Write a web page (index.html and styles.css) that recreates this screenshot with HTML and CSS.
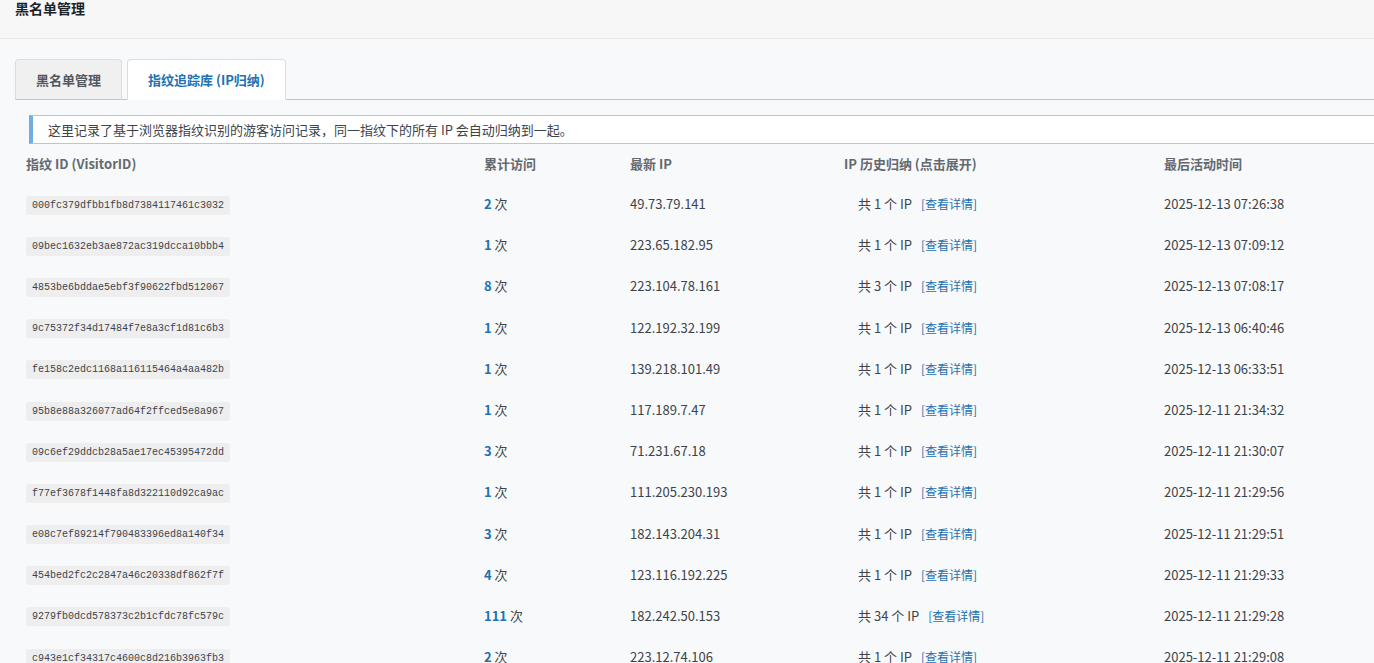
FILE: index.html
```html
<!DOCTYPE html>
<html lang="zh-CN">
<head>
  <meta charset="UTF-8" />
  <meta name="viewport" content="width=device-width, initial-scale=1.0"/>
  <title>黑名单管理</title>
  <link rel="stylesheet" href="styles.css">
</head>
<body>

  <div class="topbar">
    <h1>黑名单管理</h1>
  </div>

  <div class="wrap">
    <div class="tabs">
      <a class="tab">黑名单管理</a>
      <a class="tab active">指纹追踪库 (IP归纳)</a>
    </div>

    <div class="notice">这里记录了基于浏览器指纹识别的游客访问记录，同一指纹下的所有 IP 会自动归纳到一起。</div>

    <div class="table">
      <div class="row head">
        <div>指纹 ID (VisitorID)</div>
        <div>累计访问</div>
        <div>最新 IP</div>
        <div>IP 历史归纳 (点击展开)</div>
        <div>最后活动时间</div>
      </div>

      <div class="row">
        <div><code>000fc379dfbb1fb8d7384117461c3032</code></div>
        <div><b>2</b> 次</div>
        <div>49.73.79.141</div>
        <div class="hist">共 1 个 IP <a class="more">[查看详情]</a></div>
        <div>2025-12-13 07:26:38</div>
      </div>
      <div class="row">
        <div><code>09bec1632eb3ae872ac319dcca10bbb4</code></div>
        <div><b>1</b> 次</div>
        <div>223.65.182.95</div>
        <div class="hist">共 1 个 IP <a class="more">[查看详情]</a></div>
        <div>2025-12-13 07:09:12</div>
      </div>
      <div class="row">
        <div><code>4853be6bddae5ebf3f90622fbd512067</code></div>
        <div><b>8</b> 次</div>
        <div>223.104.78.161</div>
        <div class="hist">共 3 个 IP <a class="more">[查看详情]</a></div>
        <div>2025-12-13 07:08:17</div>
      </div>
      <div class="row">
        <div><code>9c75372f34d17484f7e8a3cf1d81c6b3</code></div>
        <div><b>1</b> 次</div>
        <div>122.192.32.199</div>
        <div class="hist">共 1 个 IP <a class="more">[查看详情]</a></div>
        <div>2025-12-13 06:40:46</div>
      </div>
      <div class="row">
        <div><code>fe158c2edc1168a116115464a4aa482b</code></div>
        <div><b>1</b> 次</div>
        <div>139.218.101.49</div>
        <div class="hist">共 1 个 IP <a class="more">[查看详情]</a></div>
        <div>2025-12-13 06:33:51</div>
      </div>
      <div class="row">
        <div><code>95b8e88a326077ad64f2ffced5e8a967</code></div>
        <div><b>1</b> 次</div>
        <div>117.189.7.47</div>
        <div class="hist">共 1 个 IP <a class="more">[查看详情]</a></div>
        <div>2025-12-11 21:34:32</div>
      </div>
      <div class="row">
        <div><code>09c6ef29ddcb28a5ae17ec45395472dd</code></div>
        <div><b>3</b> 次</div>
        <div>71.231.67.18</div>
        <div class="hist">共 1 个 IP <a class="more">[查看详情]</a></div>
        <div>2025-12-11 21:30:07</div>
      </div>
      <div class="row">
        <div><code>f77ef3678f1448fa8d322110d92ca9ac</code></div>
        <div><b>1</b> 次</div>
        <div>111.205.230.193</div>
        <div class="hist">共 1 个 IP <a class="more">[查看详情]</a></div>
        <div>2025-12-11 21:29:56</div>
      </div>
      <div class="row">
        <div><code>e08c7ef89214f790483396ed8a140f34</code></div>
        <div><b>3</b> 次</div>
        <div>182.143.204.31</div>
        <div class="hist">共 1 个 IP <a class="more">[查看详情]</a></div>
        <div>2025-12-11 21:29:51</div>
      </div>
      <div class="row">
        <div><code>454bed2fc2c2847a46c20338df862f7f</code></div>
        <div><b>4</b> 次</div>
        <div>123.116.192.225</div>
        <div class="hist">共 1 个 IP <a class="more">[查看详情]</a></div>
        <div>2025-12-11 21:29:33</div>
      </div>
      <div class="row">
        <div><code>9279fb0dcd578373c2b1cfdc78fc579c</code></div>
        <div><b>111</b> 次</div>
        <div>182.242.50.153</div>
        <div class="hist">共 34 个 IP <a class="more">[查看详情]</a></div>
        <div>2025-12-11 21:29:28</div>
      </div>
      <div class="row">
        <div><code>c943e1cf34317c4600c8d216b3963fb3</code></div>
        <div><b>2</b> 次</div>
        <div>223.12.74.106</div>
        <div class="hist">共 1 个 IP <a class="more">[查看详情]</a></div>
        <div>2025-12-11 21:29:08</div>
      </div>
    </div>
  </div>

</body>
</html>
```

FILE: styles.css
```css
* {
  box-sizing: border-box;
}
html {
  overflow: hidden;
}
body {
  margin: 0;
  font-family: "Noto Sans CJK SC", "Noto Sans", sans-serif;
  font-size: 13px;
  color: #3c434a;
  background: #f8f9fb;
}

.topbar {
  height: 39px;
  padding: 0 15px;
  background: #f7f7f7;
  border-bottom: 1px solid #e8e8e8;
}
.topbar h1 {
  margin: 0;
  font-size: 14px;
  line-height: 17px;
  font-weight: bold;
  color: #1d2327;
}

.wrap {
  padding: 0 15px;
}

.tabs {
  display: flex;
  gap: 5px;
  margin: 20px -15px 0 0;
  border-bottom: 1px solid #c3c4c7;
}
.tab {
  display: block;
  height: 41px;
  line-height: 39px;
  padding: 0 20px;
  margin-bottom: -1px;
  font-weight: bold;
  color: #50575e;
  background: #f0f0f1;
  border: 1px solid #dcdcde;
  border-bottom-color: #c3c4c7;
  border-radius: 4px 4px 0 0;
}
.tab.active {
  color: #2271b1;
  background: #fff;
  border-bottom-color: #fff;
}

.notice {
  margin: 15px -40px 0 14px;
  padding: 0 15px;
  height: 29px;
  line-height: 27px;
  background: #fff;
  border: 1px solid #c3c4c7;
  border-left: 4px solid #72aee6;
  color: #3c434a;
}

.table {
  padding-left: 11px;
}
.row {
  display: grid;
  grid-template-columns: 458px 146px 214px 320px 1fr;
  align-items: center;
  height: 41.2px;
}
.row.head {
  height: 39px;
  font-weight: 600;
  color: #646970;
}
.row b {
  color: #2271b1;
}
.row .hist {
  padding-left: 14px;
}

code {
  display: inline-block;
  font-family: "Liberation Mono", monospace;
  font-size: 10px;
  line-height: 19px;
  padding: 0 6px;
  background: #eeeeef;
  border-radius: 3px;
  color: #3c434a;
}

.more {
  margin-left: 6px;
  font-size: 12px;
  color: #2271b1;
  cursor: pointer;
}
```
